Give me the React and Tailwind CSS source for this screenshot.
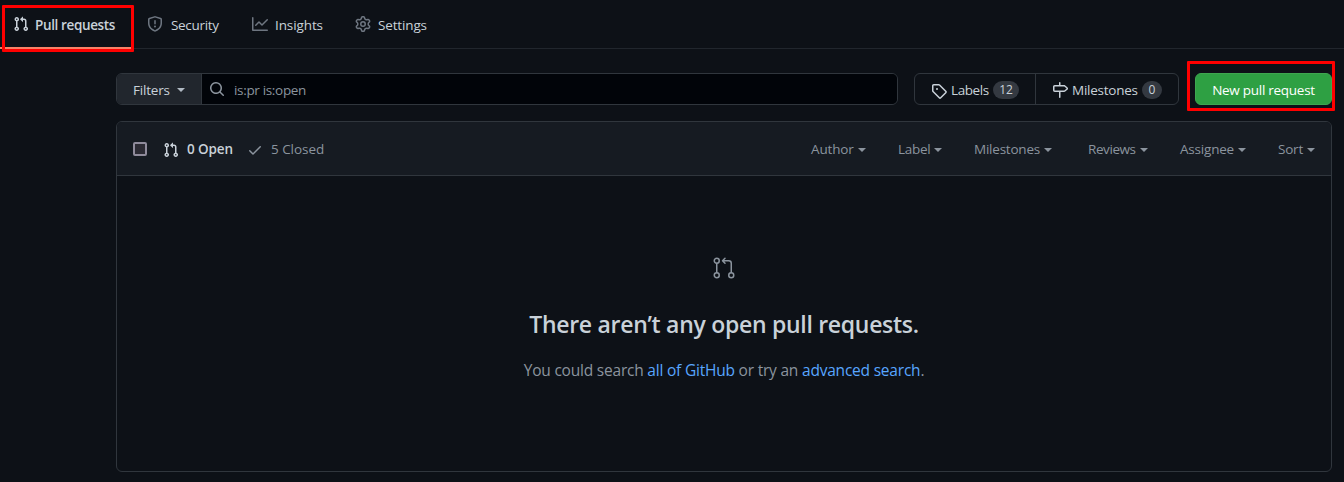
import React from "react";

const PATHS = {
  pull: "M7.177 3.073L9.573.677A.25.25 0 0110 .854v4.792a.25.25 0 01-.427.177L7.177 3.427a.25.25 0 010-.354zM3.75 2.5a.75.75 0 100 1.5.75.75 0 000-1.5zm-2.25.75a2.25 2.25 0 113 2.122v5.256a2.251 2.251 0 11-1.5 0V5.372A2.25 2.25 0 011.5 3.25zM11 2.5h-1V4h1a1 1 0 011 1v5.628a2.251 2.251 0 101.5 0V5A2.5 2.5 0 0011 2.5zm1 10.25a.75.75 0 111.5 0 .75.75 0 01-1.5 0zM3.75 12a.75.75 0 100 1.5.75.75 0 000-1.5z",
  shield: "M7.467.133a1.75 1.75 0 011.066 0l5.25 1.68A1.75 1.75 0 0115 3.48V7c0 1.566-.32 3.182-1.303 4.682-.983 1.498-2.585 2.813-5.032 3.855a1.7 1.7 0 01-1.33 0c-2.447-1.042-4.049-2.357-5.032-3.855C1.32 10.182 1 8.566 1 7V3.48a1.75 1.75 0 011.217-1.667l5.25-1.68zm.61 1.429a.25.25 0 00-.153 0l-5.25 1.68a.25.25 0 00-.174.238V7c0 1.358.275 2.666 1.057 3.86.784 1.194 2.121 2.34 4.366 3.297a.2.2 0 00.154 0c2.245-.956 3.582-2.104 4.366-3.298C13.225 9.666 13.5 8.36 13.5 7V3.48a.25.25 0 00-.174-.237l-5.25-1.68zM9 10.5a1 1 0 11-2 0 1 1 0 012 0zm-.25-5.75a.75.75 0 10-1.5 0v3a.75.75 0 001.5 0v-3z",
  graph: "M1.5 1.75a.75.75 0 00-1.5 0v12.5c0 .414.336.75.75.75h14.5a.75.75 0 000-1.5H1.5V1.75zm14.28 2.53a.75.75 0 00-1.06-1.06L10 7.94 7.53 5.47a.75.75 0 00-1.06 0L3.22 8.72a.75.75 0 001.06 1.06L7 7.06l2.47 2.47a.75.75 0 001.06 0l5.25-5.25z",
  gear: "M7.429 1.525a6.593 6.593 0 011.142 0c.036.003.108.036.137.146l.289 1.105c.147.56.55.967.997 1.189.174.086.341.183.501.29.417.278.97.423 1.53.27l1.102-.303c.11-.03.175.016.195.046.219.31.41.641.573.989.014.031.022.11-.059.19l-.815.806c-.411.406-.562.957-.53 1.456a4.588 4.588 0 010 .582c-.032.499.119 1.05.53 1.456l.815.806c.08.08.073.159.059.19a6.494 6.494 0 01-.573.99c-.02.029-.086.074-.195.045l-1.103-.303c-.559-.153-1.112-.008-1.529.27-.16.107-.327.204-.5.29-.449.222-.851.628-.998 1.189l-.289 1.105c-.029.11-.101.143-.137.146a6.613 6.613 0 01-1.142 0c-.036-.003-.108-.037-.137-.146l-.289-1.105c-.147-.56-.55-.967-.997-1.189a4.502 4.502 0 01-.501-.29c-.417-.278-.97-.423-1.53-.27l-1.102.303c-.11.03-.175-.016-.195-.046a6.492 6.492 0 01-.573-.989c-.014-.031-.022-.11.059-.19l.815-.806c.411-.406.562-.957.53-1.456a4.587 4.587 0 010-.582c.032-.499-.119-1.05-.53-1.456l-.815-.806c-.08-.08-.073-.159-.059-.19a6.44 6.44 0 01.573-.99c.02-.029.086-.075.195-.045l1.103.303c.559.153 1.112.008 1.529-.27.16-.107.327-.204.5-.29.449-.222.851-.628.998-1.189l.289-1.105c.029-.11.101-.143.137-.146zM8 0c-.236 0-.47.01-.701.03-.743.065-1.29.615-1.458 1.261l-.29 1.106c-.017.066-.078.158-.211.224a5.994 5.994 0 00-.668.386c-.123.082-.233.09-.3.071L3.27 2.776c-.644-.177-1.392.02-1.82.63a7.977 7.977 0 00-.704 1.217c-.315.675-.111 1.422.363 1.891l.815.806c.05.048.098.147.088.294a6.084 6.084 0 000 .772c.01.147-.038.246-.088.294l-.815.806c-.474.469-.678 1.216-.363 1.891.2.428.436.835.704 1.218.428.609 1.176.806 1.82.63l1.103-.303c.066-.019.176-.011.299.071.213.143.436.272.668.386.133.066.194.158.212.224l.289 1.106c.169.646.715 1.196 1.458 1.26a8.094 8.094 0 001.402 0c.743-.064 1.29-.614 1.458-1.26l.29-1.106c.017-.066.078-.158.211-.224a5.98 5.98 0 00.668-.386c.123-.082.233-.09.3-.071l1.102.302c.644.177 1.392-.02 1.82-.63.268-.382.505-.789.704-1.217.315-.675.111-1.422-.364-1.891l-.814-.806c-.05-.048-.098-.147-.088-.294a6.1 6.1 0 000-.772c-.01-.147.039-.246.088-.294l.814-.806c.475-.469.679-1.216.364-1.891a7.992 7.992 0 00-.704-1.218c-.428-.609-1.176-.806-1.82-.63l-1.103.303c-.066.019-.176.011-.299-.071a5.991 5.991 0 00-.668-.386c-.133-.066-.194-.158-.212-.224L10.16 1.29C9.99.645 9.444.095 8.701.031A8.094 8.094 0 008 0zm1.5 8a1.5 1.5 0 11-3 0 1.5 1.5 0 013 0zM11 8a3 3 0 11-6 0 3 3 0 016 0z",
  search: "M11.5 7a4.499 4.499 0 11-8.998 0A4.499 4.499 0 0111.5 7zm-.82 4.74a6 6 0 111.06-1.06l3.04 3.04a.75.75 0 11-1.06 1.06l-3.04-3.04z",
  tag: "M2.5 7.775V2.75a.25.25 0 01.25-.25h5.025a.25.25 0 01.177.073l6.25 6.25a.25.25 0 010 .354l-5.025 5.025a.25.25 0 01-.354 0l-6.25-6.25a.25.25 0 01-.073-.177zm-1.5 0V2.75C1 1.784 1.784 1 2.75 1h5.025c.464 0 .91.184 1.238.513l6.25 6.25a1.75 1.75 0 010 2.474l-5.026 5.026a1.75 1.75 0 01-2.474 0l-6.25-6.25A1.75 1.75 0 011 7.775zM6 5a1 1 0 100 2 1 1 0 000-2z",
  milestone: "M7.75 0a.75.75 0 01.75.75V3h3.634c.414 0 .814.147 1.13.414l2.07 1.75a1.75 1.75 0 010 2.672l-2.07 1.75a1.75 1.75 0 01-1.13.414H8.5v5.25a.75.75 0 11-1.5 0V10H2.75A1.75 1.75 0 011 8.25v-3.5C1 3.784 1.784 3 2.75 3H7V.75A.75.75 0 017.75 0zm0 8.5h4.384a.25.25 0 00.161-.06l2.07-1.75a.25.25 0 000-.38l-2.07-1.75a.25.25 0 00-.161-.06H2.75a.25.25 0 00-.25.25v3.5c0 .138.112.25.25.25h5z",
  check: "M13.78 4.22a.75.75 0 010 1.06l-7.25 7.25a.75.75 0 01-1.06 0L2.22 9.28a.75.75 0 011.06-1.06L6 10.94l6.72-6.72a.75.75 0 011.06 0z",
};

function Icon({ name, className = "" }) {
  return (
    <svg viewBox="0 0 16 16" className={`size-4 shrink-0 ${className}`} fill="currentColor" aria-hidden="true">
      <path fillRule="evenodd" d={PATHS[name]} />
    </svg>
  );
}

function Caret({ className = "" }) {
  return (
    <svg viewBox="0 0 8 4" className={`h-1 w-2 shrink-0 ${className}`} fill="currentColor" aria-hidden="true">
      <path d="M0 0h8L4 4z" />
    </svg>
  );
}

const TABS = [
  { icon: "shield", label: "Security", width: "w-[105px]", gap: "gap-2", tracking: "tracking-[-0.32px]" },
  { icon: "graph", label: "Insights", width: "w-[103px]", gap: "gap-[7px]", tracking: "tracking-[-0.1px]" },
  { icon: "gear", label: "Settings", width: "w-[100px]", gap: "gap-[7px]", tracking: "tracking-[-0.15px]" },
];

const MENUS = [
  { label: "Author", width: "w-[87px]", text: "w-[43px] tracking-[-0.15px]" },
  { label: "Label", width: "w-[76px]", text: "w-8 tracking-[-0.3px]" },
  { label: "Milestones", width: "w-[114px]", text: "w-[66px] tracking-[-0.22px]" },
  { label: "Reviews", width: "w-[92px]", text: "w-12 tracking-[-0.42px]" },
  { label: "Assignee", width: "w-[98px]", text: "w-[54px] tracking-[-0.2px]" },
  { label: "Sort", width: "w-[53px]", text: "w-[25px] tracking-[-0.2px]" },
];

export default function App() {
  return (
    <div className="relative flex h-[482px] w-[1344px] flex-col overflow-hidden bg-[#0d1117] font-['Open_Sans','Noto_Sans',sans-serif] text-[13.5px] leading-5 whitespace-nowrap text-[#c9d1d9]">
      <nav className="flex h-[49px] shrink-0 border-b border-[#21262d]">
        <div className="relative flex h-[49px] w-[131px] gap-[6px] border-b-2 border-[#f78166] pt-[15px] pl-[13px]">
          <Icon name="pull" className="mt-px" />
          <span className="font-semibold tracking-[-0.37px]">Pull requests</span>
        </div>
        <div className="flex pt-[15px] pl-4">
          {TABS.map((t) => (
            <div key={t.label} className={`flex ${t.gap} ${t.width}`}>
              <Icon name={t.icon} className="mt-px text-[#6e7681]" />
              <span className={t.tracking}>{t.label}</span>
            </div>
          ))}
        </div>
      </nav>

      <div className="mt-6 ml-[116px] flex h-8 w-[1216px] shrink-0">
        <div className="flex w-[782px] overflow-hidden rounded-md border border-[#30363d]">
          <button className="flex w-[85px] items-center border-r border-[#30363d] bg-[#21262d] pl-4">
            <span className="w-[44px] pt-0.5 text-left tracking-[-0.2px]">Filters</span>
            <Caret className="mt-0.5 text-[#b1bac4]" />
          </button>
          <div className="flex grow items-center bg-[#010409] pl-[7px] text-[#8b949e]">
            <Icon name="search" />
            <span className="ml-[9px] pt-0.5 tracking-[-0.33px]">is:pr is:open</span>
          </div>
        </div>
        <div className="ml-4 flex w-[265px] rounded-md border border-[#30363d]">
          <div className="flex w-[121px] items-center border-r border-[#30363d] pl-4">
            <Icon name="tag" className="mt-[3px]" />
            <span className="ml-1 w-[42px] pt-0.5 tracking-[-0.4px]">Labels</span>
            <span className="mt-0.5 flex h-[18px] w-[26px] items-center justify-center rounded-full bg-[#343941] text-xs">12</span>
          </div>
          <div className="flex grow items-center pl-4">
            <Icon name="milestone" className="mt-[2px]" />
            <span className="ml-1 w-[70px] pt-0.5 tracking-[-0.25px]">Milestones</span>
            <span className="mt-0.5 flex h-[18px] w-5 items-center justify-center rounded-full bg-[#343941] text-xs">0</span>
          </div>
        </div>
        <button className="ml-4 w-[137px] rounded-md border border-[#3fa650] bg-[#2ea043] pt-0.5 tracking-[-0.27px] text-white">New pull request</button>
      </div>

      <main className="mt-4 ml-[116px] flex h-[351px] w-[1216px] shrink-0 flex-col overflow-hidden rounded-md border border-[#30363d]">
        <header className="flex h-[54px] shrink-0 items-center border-b border-[#30363d] bg-[#161b22] pl-4 text-[#8b949e]">
          <span className="size-[14px] rounded-[2px] border-2 border-[#8f8b9b] bg-[#2b2a33]" />
          <Icon name="pull" className="ml-4 mt-[2px] text-[#c9d1d9]" />
          <span className="ml-2 w-[60px] font-semibold tracking-[-0.1px] text-[#c9d1d9]">0 Open</span>
          <Icon name="check" className="mt-[3px]" />
          <span className="ml-2 tracking-[-0.05px]">5 Closed</span>
          <div className="ml-auto flex">
            {MENUS.map((m) => (
              <div key={m.label} className={`flex items-center gap-1 ${m.width}`}>
                <span className={m.text}>{m.label}</span>
                <Caret className="mt-[3px]" />
              </div>
            ))}
          </div>
        </header>
        <section className="flex flex-col items-center pt-20">
          <svg viewBox="0 0 24 24" className="size-6 text-[#8b949e]" fill="none" stroke="currentColor" strokeWidth="1.5" aria-hidden="true">
            <circle cx="4.75" cy="4.75" r="2.5" />
            <circle cx="4.75" cy="19.25" r="2.5" />
            <circle cx="19.25" cy="19.25" r="2.5" />
            <path strokeLinecap="round" strokeLinejoin="round" d="M4.75 7.5v9M13 2.25l-2.5 2.5 2.5 2.5M10.75 4.75h6a2.5 2.5 0 0 1 2.5 2.5v9.25" />
          </svg>
          <h3 className="mt-[26px] text-[23px] leading-9 font-semibold tracking-[-0.29px]">There aren’t any open pull requests.</h3>
          <p className="mt-4 text-[15.5px] leading-6 tracking-[-0.21px] text-[#8b949e]">
            You could search <a className="text-[#58a6ff]">all of GitHub</a> or try an <a className="text-[#58a6ff]">advanced search</a>.
          </p>
        </section>
      </main>

      {/* Highlight frames over the active tab and the primary action */}
      <div className="absolute top-[5px] left-[2px] h-[47px] w-[132px] rounded-[1px] border-3 border-[#ff0000]" />
      <div className="absolute top-[61px] left-[1187px] h-[50px] w-[148px] rounded-[1px] border-3 border-[#ff0000]" />
    </div>
  );
}
